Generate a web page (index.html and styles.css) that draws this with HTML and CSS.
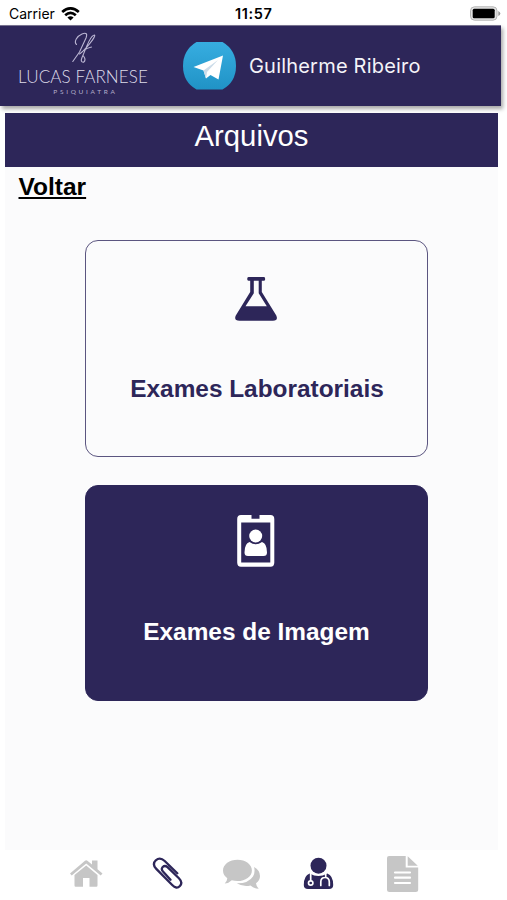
FILE: index.html
```html
<!DOCTYPE html>
<html lang="pt-BR">
<head>
<meta charset="utf-8">
<title>Arquivos</title>
<link rel="stylesheet" href="styles.css">
</head>
<body>
<div class="status">
  <div class="carrier"><span>Carrier</span>
    <svg width="19" height="14" viewBox="0 0 19 14" fill="none" stroke="#000" stroke-width="2.7"><path d="M1.2 5.1Q9.5-2.3 17.8 5.1M4.2 8.3Q9.5 3.6 14.8 8.3"/><path d="M9.5 13.5 6.4 10.4Q9.5 8.1 12.6 10.4Z" fill="#000" stroke="none"/></svg>
  </div>
  <time class="clock">11:57</time>
  <svg class="battery" width="32" height="15" viewBox="0 0 32 15"><rect x="1.500" y=".8" width="26.500" height="13.400" rx="4" fill="#e4e4e4" stroke="#b5b5b5"/><rect x="3.700" y="2.800" width="22" height="9.400" rx="1.500"/><path d="M29.300 5v5q2-1 2-2.500t-2-2.500z" fill="#999"/></svg>
</div>
<header class="header">
  <div class="brand">
    <svg class="monogram" width="26" height="31" viewBox="71 32 26 31" fill="none" stroke="#bbb6d3" stroke-width="1.100" stroke-linecap="round"><path d="M76.500 44.500C73.500 42 77 36 82 34Q88.500 31.500 86 38L79.500 52 72.800 61.500"/><path d="M79.500 54C85 50 93 40 94.500 36.500Q95.500 33.500 92 36.500C88 41 85.500 50 82 57.500Q80 62.500 83.500 62.300Q86.500 60 83.500 56M83.500 50.500Q87 48 91.500 47"/></svg>
    <div class="brand-name">LUCAS FARNESE</div>
    <div class="brand-role">PSIQUIATRA</div>
  </div>
  <svg class="telegram" width="53" height="48" viewBox="183 42 53 48"><defs><linearGradient id="sky" x2="0" y2="1"><stop stop-color="#37ade0"/><stop offset="1" stop-color="#2093c6"/></linearGradient></defs><path d="M196.500 42H222.500Q236 50 236 66T222.500 89.500H196.500Q183 82 183 66T196.500 42Z" fill="url(#sky)"/><path d="M193.500 67 223 55.500 218.500 79.500 210.500 75 206 78.500 203.500 70.500Z" fill="#fff"/><path d="M203.500 70.500 218 60 207 72 206 78.500Z" fill="#ccdce9"/></svg>
  <div class="user">Guilherme Ribeiro</div>
</header>
<main class="page">
  <h1 class="title">Arquivos</h1>
  <a class="back">Voltar</a>
  <section class="cards">
    <div class="card">
      <svg width="42" height="44" viewBox="235.500 277 42 44"><path fill="#2d2659" fill-rule="evenodd" d="M249 277H264.500Q265.700 277 265.700 278.900T264.500 280.700H262.300V292L276.800 315.500Q279 320.800 273.500 320.800H240Q234 320.800 236.300 315.500L250.700 292V280.700H249Q247.700 280.700 247.700 278.900T249 277ZM254.300 280.700V293.200L246 306.300H267.300L259.200 293.200V280.700Z"/></svg>
      <h2>Exames Laboratoriais</h2>
    </div>
    <div class="card dark">
      <svg width="38" height="52" viewBox="237 515 38 52"><path fill="#fff" fill-rule="evenodd" d="M241 515H251.500V518.800H259.500V515H270.500Q274.300 515 274.300 519V562.500Q274.300 566.700 270.500 566.700H241Q237.200 566.700 237.200 562.500V519Q237.200 515 241 515ZM241.200 522.500V562.500H270.300V522.500Z"/><circle cx="255.700" cy="536" r="6.500" fill="#fff"/><path fill="#fff" d="M249.500 542Q255.700 546.500 262 542Q267 543.500 267 552.500Q267 556 263.500 556H248Q244.500 556 244.500 552.500Q244.500 543.500 249.500 542Z"/></svg>
      <h2>Exames de Imagem</h2>
    </div>
  </section>
</main>
<nav class="nav">
  <svg width="34" height="38" viewBox="69 855 34 38" fill="#c6c6c6"><path d="M70 873.500 85 860.700Q86.200 859.800 87.400 860.700L92 864.500V860.500H97.500V869.200L102.500 873.500 100.700 875.500 86.200 863.500 71.700 875.500Z"/><path d="M86.200 865.500 97.500 875V885.500Q97.500 886.700 96.300 886.700H89.500V878H83V886.700H75.700Q74.500 886.700 74.500 885.500V875Z"/></svg>
  <svg width="34" height="38" viewBox="150 855 34 38" fill="none" stroke="#2d2659" stroke-width="2.300" stroke-linecap="round" stroke-linejoin="round"><path d="M177.300 873.300 164.700 861Q160 856.600 155.800 860.300Q151.800 864.200 156.300 868.900L172.200 885Q176.500 889.500 179.900 886Q183.200 882.500 178.900 878.200L167.500 867.200Q164.900 865 162.700 867Q160.700 869.200 163.200 871.700L170.500 879.700"/></svg>
  <svg width="40" height="38" viewBox="221 855 40 38" fill="#c6c6c6"><path d="M237.500 859.700C245.500 859.700 251.900 864.300 251.900 870.400S245.500 881 237.500 881Q234.500 881 231.800 880.200Q228.500 883.500 224.700 883.500Q227.200 881 227.300 878.200Q223 875 223 870.400C223 864.300 229.500 859.700 237.500 859.700Z"/><path d="M254 867Q260 870.300 260 876Q260 880.500 256 883.200Q256.200 886 258.700 888.800Q253.500 888.500 250.500 885.500Q243.500 887.300 236.700 883.300Q248.500 883.500 253 876.500Q255.500 872 254 867Z"/></svg>
  <svg width="32" height="38" viewBox="302 855 32 38"><circle cx="318.500" cy="865.700" r="8" fill="#2d2659"/><path fill="#2d2659" d="M309.700 873.500Q318.500 878.500 327.200 873.500Q333.200 875.500 333.200 885Q333.200 889 329 889H308Q303.800 889 303.800 885Q303.800 875.500 309.700 873.500Z"/><g fill="none" stroke="#fff" stroke-width="1.700" stroke-linecap="round"><path d="M310.700 873V880.500M325.700 873V877M320.800 885.500V882Q320.800 877.500 325 877.500T329.300 882V885.500"/><circle cx="310.700" cy="883" r="2.200"/></g></svg>
  <svg width="34" height="38" viewBox="386 855 34 38"><path fill="#c6c6c6" d="M389 856H405.700V867.500H418.200V889.500Q418.200 892 415.700 892H389.500Q387 892 387 889.500V858Q387 856 389 856ZM407.700 856.200 417.800 865.700H407.700Z"/><path d="M395 872.500H410M395 877.700H410M395 883H410" stroke="#fff" stroke-width="2.200" stroke-linecap="round"/></svg>
</nav>
</body>
</html>
```
FILE: styles.css
```css
* { box-sizing: border-box; }
body { margin: 0; width: 507px; height: 900px; overflow: hidden; background: #fff; font-family: "Liberation Sans", Arial, sans-serif; display: flex; flex-direction: column; }
svg { display: block; flex: none; }
.status { height: 25px; display: grid; grid-template-columns: 226px 1fr 32px; align-items: center; padding: 1px 6px 0 9px; font-family: Inter, sans-serif; font-size: 14px; line-height: 25px; }
.carrier { display: flex; align-items: center; gap: 6px; }
.clock { font-weight: 600; font-size: 14.500px; letter-spacing: .6px; }
.header { width: 501px; height: 81px; flex: none; background: #2d2659; box-shadow: 2px 3px 4px rgba(0, 0, 0, .35); display: flex; align-items: center; border-top: 1px solid #77728f; }
.brand { width: 128px; margin-left: 19px; height: 80px; padding-top: 6px; display: flex; flex-direction: column; align-items: center; color: #dedbea; white-space: nowrap; }
.monogram { margin-left: 2px; }
.brand-name { font: 300 17px/20px Lato, sans-serif; margin-top: 4px; letter-spacing: .1px; }
.brand-role { font: 400 6.500px/9px Lato, sans-serif; letter-spacing: 2.700px; margin-left: 5px; color: #b4afcb; }
.telegram { margin: 0 0 0 36px; }
.user { margin-left: 13px; color: #f4f3f8; font: 400 20px/28px Inter, sans-serif; letter-spacing: .2px; white-space: nowrap; }
.page { margin: 7px 9px 0 5px; height: 737px; flex: none; background: #fbfbfc; }
.title { margin: 0; height: 54px; padding-top: 6px; background: #2d2659; color: #fff; text-align: center; font-size: 29.300px; line-height: 33px; font-weight: 400; }
.back { display: block; width: max-content; margin: 6px 0 0 13.500px; font-size: 24.500px; line-height: 28px; font-weight: 700; text-decoration: underline; text-underline-offset: 2px; }
.cards { display: flex; flex-direction: column; gap: 28px; margin: 39px 0 0 80px; }
.card { width: 343px; height: 217px; border: 1.500px solid #5b5580; border-radius: 13px; display: flex; flex-direction: column; align-items: center; padding-top: 36px; color: #2d2659; }
.card svg { margin-right: 1px; }
.card h2 { margin: 54px 0 0 1px; font-size: 24.400px; line-height: 28px; white-space: nowrap; }
.dark { background: #2d2659; border-color: #2d2659; color: #fff; height: 216px; padding-top: 29px; }
.dark svg { margin-right: 2px; }
.dark h2 { margin: 51px 0 0; }
.nav { height: 50px; flex: none; background: #fff; padding: 5px 0 0 69px; display: grid; grid-template-columns: 81px 71px 81px 84px 34px; }
```
